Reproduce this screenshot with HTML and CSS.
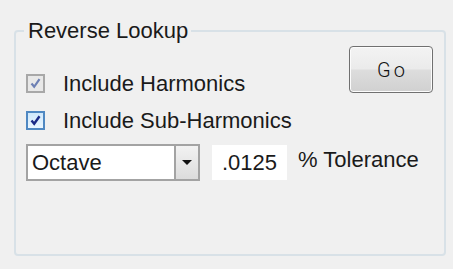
FILE: index.html
```html
<!DOCTYPE html>
<html>
<head>
<meta charset="utf-8">
<link rel="stylesheet" href="styles.css">
</head>
<body>
<fieldset class="group">
  <legend class="group-title">Reverse Lookup</legend>
  <div class="top">
    <div class="checks">
      <label class="check-row">
        <span class="box box-disabled">
          <svg width="15" height="15" viewBox="0 0 15 15"><path d="M3.5 7.5 L6.2 10.8 L11.5 3.2" fill="none" stroke="#6d80b4" stroke-width="2.2"/></svg>
        </span>
        <span class="check-label">Include Harmonics</span>
      </label>
      <label class="check-row">
        <span class="box box-on">
          <svg width="15" height="15" viewBox="0 0 15 15"><path d="M3.5 7.5 L6.2 10.8 L11.5 3.2" fill="none" stroke="#1b2a86" stroke-width="2.4"/></svg>
        </span>
        <span class="check-label">Include Sub-Harmonics</span>
      </label>
    </div>
    <button class="go">Go</button>
  </div>
  <div class="combo-row">
    <div class="combo">
      <span class="combo-text">Octave</span>
      <span class="combo-btn"><span class="arrow"></span></span>
    </div>
    <div class="field">.0125</div>
    <span class="unit">% Tolerance</span>
  </div>
</fieldset>
</body>
</html>
```

FILE: styles.css
```css
html, body {
  margin: 0;
  padding: 0;
  background: #f0f0f0;
}
body {
  width: 453px;
  height: 269px;
  overflow: hidden;
  font-family: "Liberation Sans", Arial, sans-serif;
  font-size: 22px;
  color: #1a1a1a;
}
.group {
  margin: 18px 7px 0 14px;
  padding: 0;
  border: 2px solid #d8e1e7;
  border-radius: 4px;
  height: 238px;
  box-sizing: border-box;
  min-width: 0;
}
.group-title {
  margin-left: 8px;
  padding: 0 3px 0 4px;
  line-height: 26px;
  height: 26px;
}
.top {
  display: flex;
  justify-content: space-between;
  align-items: flex-start;
}
.checks {
  display: flex;
  flex-direction: column;
  padding-top: 21px;
  padding-left: 10px;
}
.check-row {
  display: flex;
  align-items: center;
  height: 37px;
}
.box {
  width: 19px;
  height: 19px;
  box-sizing: border-box;
  display: flex;
  align-items: center;
  justify-content: center;
  margin-right: 18px;
}
.box-disabled {
  border: 2px solid #a8a8a8;
  background: #e8e8e8;
}
.box-on {
  border: 2px solid #4f88c2;
  background: linear-gradient(#cfe8fb, #eaf6ff);
}
.check-label {
  line-height: 26px;
}
.go {
  margin-top: 2px;
  margin-right: 11px;
  width: 84px;
  height: 47px;
  border: 1px solid #707070;
  border-radius: 4px;
  background: linear-gradient(#f3f3f3 0%, #ebebeb 48%, #dddddd 52%, #d0d0d0 100%);
  box-shadow: inset 0 0 0 1px #fcfcfc;
  font-family: Roboto, "DejaVu Sans", sans-serif;
  font-weight: 300;
  font-size: 20px;
  letter-spacing: 3px;
  color: #111;
  padding: 0 0 0 3px;
}
.combo-row {
  display: flex;
  align-items: center;
  margin-top: 5px;
  padding-left: 10px;
}
.combo {
  width: 174px;
  height: 37px;
  box-sizing: border-box;
  border: 2px solid #a3a3a3;
  background: #fff;
  display: flex;
}
.combo-text {
  flex: 1;
  padding-left: 4px;
  line-height: 33px;
}
.combo-btn {
  width: 22px;
  border-left: 2px solid #a3a3a3;
  background: linear-gradient(#f2f2f2, #dcdcdc);
  display: flex;
  align-items: center;
  justify-content: center;
}
.arrow {
  width: 0;
  height: 0;
  border-left: 5px solid transparent;
  border-right: 5px solid transparent;
  border-top: 5px solid #111;
}
.field {
  margin-left: 12px;
  width: 75px;
  height: 35px;
  background: #fff;
  box-sizing: border-box;
  padding-left: 10px;
  line-height: 35px;
}
.unit {
  margin-left: 11px;
  line-height: 26px;
  padding-bottom: 6px;
}
```
